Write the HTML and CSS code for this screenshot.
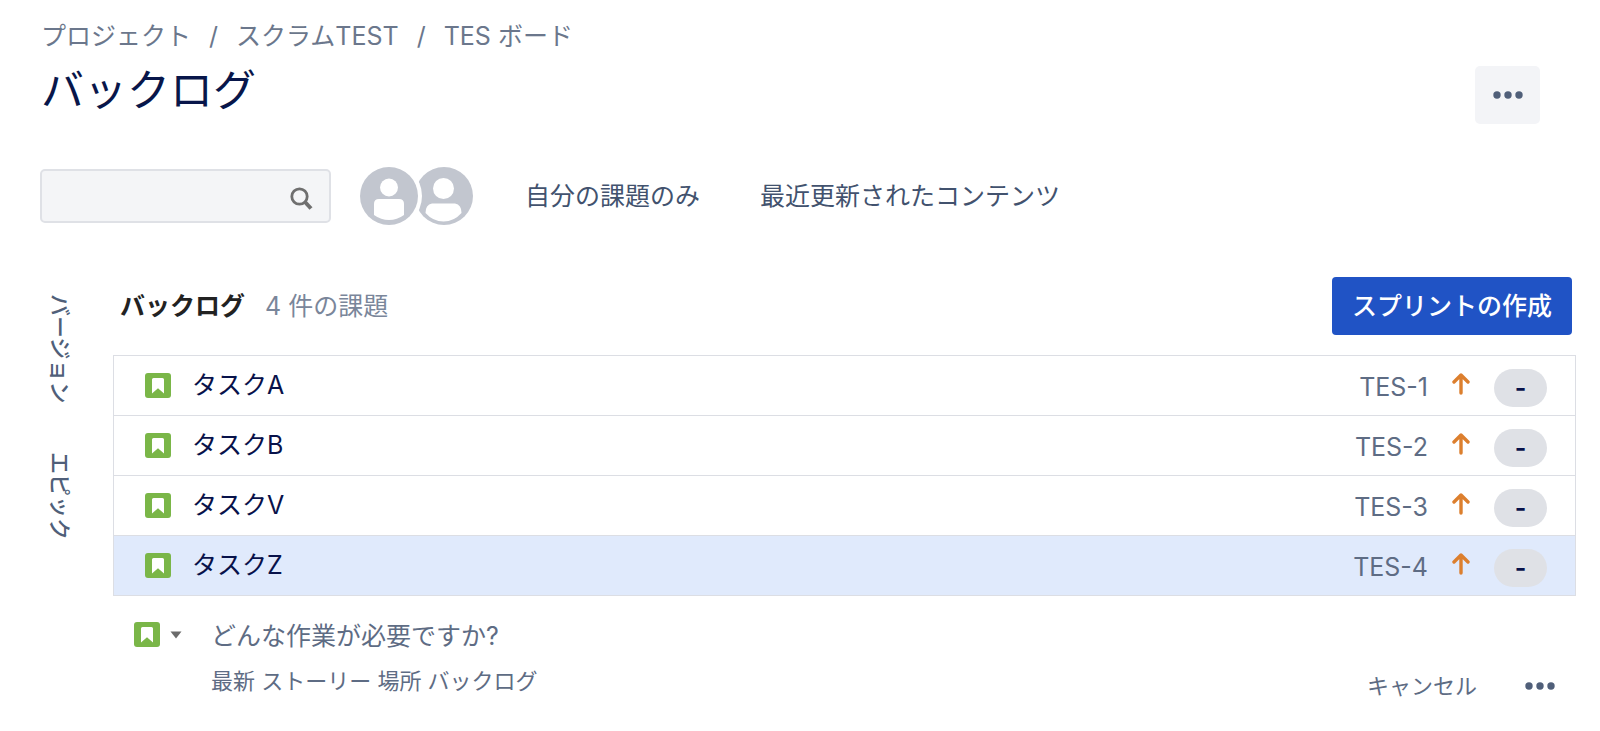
FILE: index.html
```html
<!DOCTYPE html>
<html lang="ja">
<head>
<meta charset="utf-8">
<meta name="viewport" content="width=device-width, initial-scale=1">
<title>バックログ</title>
<link rel="stylesheet" href="styles.css">
</head>
<body>
<svg class="sprite" aria-hidden="true">
  <symbol id="story" viewBox="0 0 26 26">
    <rect width="26" height="25" rx="3" fill="#7ab648"/>
    <path d="M7 6.500Q7 5 8.500 5H17.500Q19 5 19 6.500V20.500L13 15.200L7 20.500Z" fill="#fff"/>
  </symbol>
  <symbol id="arrow-up" viewBox="0 0 18 22">
    <path d="M9 20V2.500M2 9L9 2L16 9" fill="none" stroke="#dc7f2e" stroke-width="3.400" stroke-linecap="round" stroke-linejoin="round"/>
  </symbol>
  <symbol id="dots" viewBox="0 0 30 8">
    <circle cx="4" cy="4" r="3.700"/><circle cx="15" cy="4" r="3.700"/><circle cx="26" cy="4" r="3.700"/>
  </symbol>
</svg>

<header class="page-header">
  <nav class="breadcrumbs" aria-label="パンくず">
    <a href="#">プロジェクト</a><span>/</span><a href="#">スクラムTEST</a><span>/</span><a href="#">TES ボード</a>
  </nav>
  <div class="title-row">
    <h1 class="title">バックログ</h1>
    <button class="more" type="button" aria-label="その他"><svg class="dots"><use href="#dots"/></svg></button>
  </div>
</header>

<div class="toolbar">
  <label class="search">
    <input class="search-input" type="text" aria-label="検索">
    <svg class="search-icon" viewBox="0 0 24 24" aria-hidden="true">
      <circle cx="10.500" cy="10.500" r="7.700" fill="none" stroke="#6f6f6f" stroke-width="2.800"/>
      <path d="M16 16L22 22.500" stroke="#6f6f6f" stroke-width="4"/>
    </svg>
  </label>
  <svg class="avatars" viewBox="0 0 114 58" aria-hidden="true">
    <circle cx="84" cy="29" r="29" fill="#c2c6cf"/>
    <circle cx="83.500" cy="21.500" r="10.500" fill="#fff"/>
    <path d="M72 36.500H95Q101.500 37.500 101.500 46Q94 54.500 83.500 54.500T65.500 46Q65.500 37.500 72 36.500Z" fill="#fff"/>
    <circle cx="29" cy="29" r="33" fill="#fff"/>
    <circle cx="29" cy="29" r="29" fill="#c2c6cf"/>
    <circle cx="29" cy="20.500" r="9" fill="#fff"/>
    <path d="M19 32H39Q44 32 44 37V48Q37 53 29 53T14 48V37Q14 32 19 32Z" fill="#fff"/>
  </svg>
  <button class="filter" type="button">自分の課題のみ</button>
  <button class="filter" type="button">最近更新されたコンテンツ</button>
</div>

<div class="content">
  <aside class="side">
    <button class="side-tab" type="button">バージョン</button>
    <button class="side-tab" type="button">エピック</button>
  </aside>
  <main class="backlog">
    <div class="backlog-head">
      <h2 class="backlog-name">バックログ</h2>
      <span class="count">4 件の課題</span>
      <button class="create-sprint" type="button">スプリントの作成</button>
    </div>
    <ul class="issues">
      <li class="issue"><svg class="story"><use href="#story"/></svg><span class="summary">タスクA</span><a class="key" href="#">TES-1</a><svg class="priority"><use href="#arrow-up"/></svg><span class="estimate">-</span></li>
      <li class="issue"><svg class="story"><use href="#story"/></svg><span class="summary">タスクB</span><a class="key" href="#">TES-2</a><svg class="priority"><use href="#arrow-up"/></svg><span class="estimate">-</span></li>
      <li class="issue"><svg class="story"><use href="#story"/></svg><span class="summary">タスクV</span><a class="key" href="#">TES-3</a><svg class="priority"><use href="#arrow-up"/></svg><span class="estimate">-</span></li>
      <li class="issue selected"><svg class="story"><use href="#story"/></svg><span class="summary">タスクZ</span><a class="key" href="#">TES-4</a><svg class="priority"><use href="#arrow-up"/></svg><span class="estimate">-</span></li>
    </ul>
    <form class="new-issue">
      <button class="type" type="button" aria-label="ストーリー">
        <svg class="story"><use href="#story"/></svg>
        <svg class="caret" viewBox="0 0 12 8"><path d="M0.500 0.500H11.500L6 7.500Z" fill="#6b6b6b"/></svg>
      </button>
      <div class="fields">
        <input class="new-summary" type="text" aria-label="課題の要約" placeholder="どんな作業が必要ですか?">
        <div class="hint">最新 ストーリー 場所 バックログ</div>
      </div>
      <div class="actions">
        <button class="cancel" type="button">キャンセル</button>
        <button class="plain" type="button" aria-label="その他"><svg class="dots"><use href="#dots"/></svg></button>
      </div>
    </form>
  </main>
</div>
</body>
</html>
```
FILE: styles.css
```css
* { box-sizing: border-box; }

body {
  margin: 0;
  background: #fff;
  color: #08124a;
  font-family: Inter, "Noto Sans CJK JP", sans-serif;
  font-size: 25px;
  line-height: 32px;
}

button, input { font: inherit; color: inherit; border: 0; padding: 0; background: none; }
button { cursor: pointer; white-space: nowrap; }
a { color: inherit; text-decoration: none; }
h1, h2, ul { margin: 0; padding: 0; }
svg { display: block; flex: none; }

.sprite { position: absolute; width: 0; height: 0; }
.story { width: 26px; height: 26px; }
.dots { width: 30px; height: 8px; fill: #505f79; }

.page-header { padding: 20px 60px 0 41px; }
.breadcrumbs { display: flex; gap: 18px; color: #6b778c; }
.title-row { display: flex; justify-content: space-between; margin-top: 14px; }
.title { font-size: 43px; font-weight: 400; line-height: 48px; color: #08164a; }
.more {
  display: grid;
  place-items: center;
  width: 65px;
  height: 58px;
  border-radius: 5px;
  background: #f3f4f7;
}

.toolbar { display: flex; align-items: center; margin-top: 43px; padding: 0 40px; }
.search {
  display: flex;
  align-items: center;
  width: 291px;
  height: 54px;
  padding: 3px 16px 0;
  border: 2px solid #dfe1e6;
  border-radius: 5px;
  background: #f4f5f7;
}
.search-input { flex: 1; min-width: 0; outline: 0; }
.search-icon { width: 24px; height: 24px; }
.avatars { width: 114px; height: 58px; margin-left: 29px; }
.filter { margin-left: 51px; color: #42526e; }
.filter + .filter { margin-left: 60px; }

.content { display: flex; gap: 33px; margin-top: 52px; padding: 0 24px 0 40px; }
.side { display: flex; flex-direction: column; align-items: center; gap: 48px; width: 40px; padding-top: 17px; }
.side-tab {
  writing-mode: vertical-rl;
  text-orientation: sideways;
  font-size: 22px;
  font-weight: 500;
  color: #505f79;
}

.backlog { flex: 1; min-width: 0; }
.backlog-head { display: flex; align-items: center; gap: 20px; padding: 0 4px 0 7px; }
.backlog-name { font-size: 25px; font-weight: 700; color: #222; }
.count { color: #7a869a; }
.create-sprint {
  height: 58px;
  margin-left: auto;
  padding: 0 20px;
  border-radius: 4px;
  background: #2053c5;
  color: #fff;
  font-weight: 500;
}

.issues { margin-top: 20px; border: 1px solid #dcdee4; border-bottom: 0; list-style: none; }
.issue {
  display: flex;
  align-items: center;
  height: 60px;
  padding: 0 28px 0 31px;
  border-bottom: 1px solid #dcdee4;
}
.selected { background: #e0eafc; }
.summary { flex: 1; margin-left: 21px; padding-bottom: 2px; }
.key { padding-top: 3px; color: #5e6c84; }
.priority { width: 18px; height: 22px; margin: 0 24px 4px; }
.estimate {
  width: 53px;
  height: 38px;
  margin-top: 4px;
  border-radius: 19px;
  background: #dfe1e6;
  line-height: 38px;
  text-align: center;
  font-weight: 600;
}

.new-issue { display: flex; padding: 23px 21px 0 21px; }
.type { display: flex; align-items: center; gap: 10px; height: 32px; }
.caret { width: 12px; height: 8px; }
.fields { flex: 1; margin-left: 29px; }
.new-summary { display: block; width: 100%; height: 34px; outline: 0; }
.new-summary::placeholder { color: #5e6c84; opacity: 1; }
.hint { margin-top: 12px; font-size: 22px; color: #5e6c84; }
.actions { display: flex; align-items: center; gap: 48px; height: 32px; margin-top: 51px; color: #5e6c84; }
.cancel { font-size: 22px; }
```
